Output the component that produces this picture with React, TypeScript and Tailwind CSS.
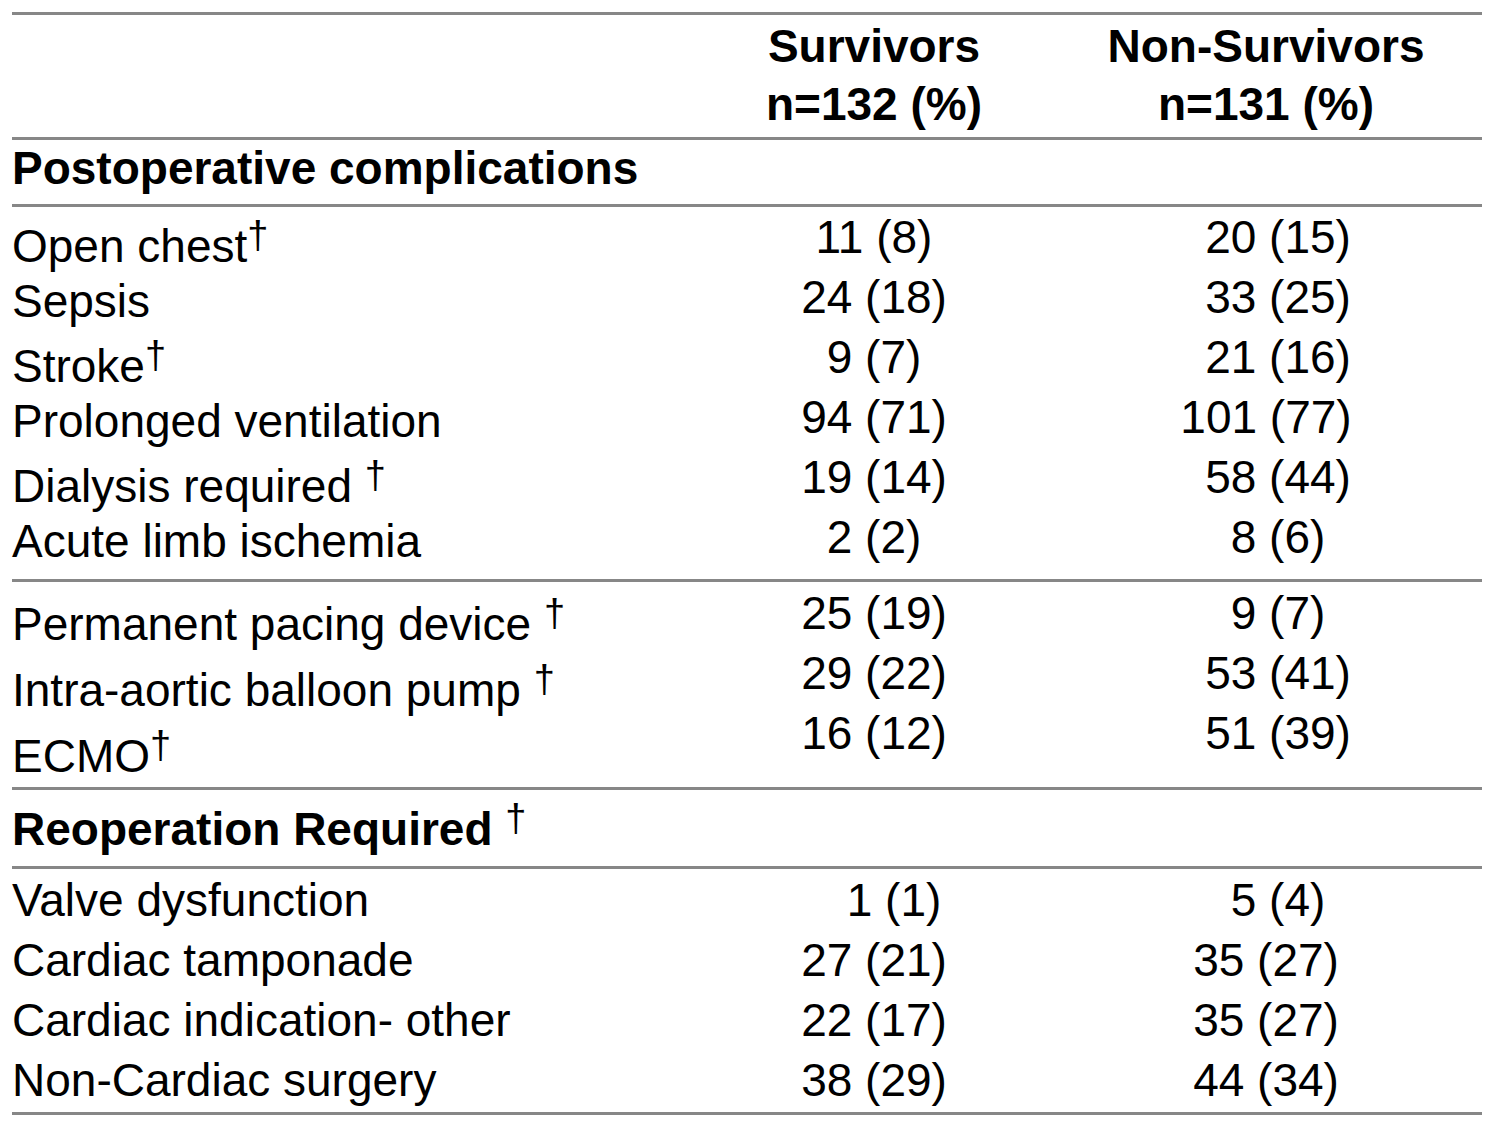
import React from 'react';

type Row = {
  label: string;
  dag?: 'tight' | 'spaced';
  s: string;
  n: string;
  sCls?: string;
  nCls?: string;
};

const section1: Row[] = [
  { label: 'Open chest', dag: 'tight', s: '11 (8)', n: '20 (15)' },
  { label: 'Sepsis', s: '24 (18)', n: '33 (25)' },
  { label: 'Stroke', dag: 'tight', s: '9 (7)', n: '21 (16)' },
  { label: 'Prolonged ventilation', s: '94 (71)', n: '101 (77)', nCls: 'pl-0' },
  { label: 'Dialysis required', dag: 'spaced', s: '19 (14)', n: '58 (44)' },
  { label: 'Acute limb ischemia', s: '2 (2)', n: '8 (6)' },
];

const section2: Row[] = [
  { label: 'Permanent pacing device', dag: 'spaced', s: '25 (19)', n: '9 (7)' },
  { label: 'Intra-aortic balloon pump', dag: 'spaced', s: '29 (22)', n: '53 (41)' },
  { label: 'ECMO', dag: 'tight', s: '16 (12)', n: '51 (39)' },
];

const section3: Row[] = [
  { label: 'Valve dysfunction', s: '1 (1)', n: '5 (4)', sCls: 'pl-[40px]' },
  { label: 'Cardiac tamponade', s: '27 (21)', n: '35 (27)', nCls: 'pl-0' },
  { label: 'Cardiac indication- other', s: '22 (17)', n: '35 (27)', nCls: 'pl-0' },
  { label: 'Non-Cardiac surgery', s: '38 (29)', n: '44 (34)', nCls: 'pl-0' },
];

const grid = 'grid grid-cols-[738px_248px_1fr]';

function Rule() {
  return <div className="h-[3px] bg-[#878787]" />;
}

// superscript dagger, kept out of the line box so rows keep their height
function Dagger({ spaced }: { spaced?: boolean }) {
  return (
    <>
      {spaced ? ' ' : ''}
      <span className="text-[38px] font-normal leading-[0px] align-[14px]">†</span>
    </>
  );
}

function Label({ row, plain, dagger }: { row: Row; plain: string; dagger: string }) {
  return (
    <div className={`whitespace-nowrap ${row.dag ? dagger : plain}`}>
      {row.label}
      {row.dag && <Dagger spaced={row.dag === 'spaced'} />}
    </div>
  );
}

function Section({
  rows,
  height,
  labelTop,
  valueTop,
  plain,
  dagger,
}: {
  rows: Row[];
  height: string;
  labelTop: string;
  valueTop: string;
  plain: string;
  dagger: string;
}) {
  return (
    <div className={`${grid} ${height}`}>
      <div className={`flex flex-col ${labelTop}`}>
        {rows.map((r) => (
          <Label key={r.label} row={r} plain={plain} dagger={dagger} />
        ))}
      </div>
      <div className={`flex flex-col ${valueTop}`}>
        {rows.map((r) => (
          <div key={r.label} className={`text-center leading-[60px] whitespace-nowrap ${r.sCls ?? ''}`}>
            {r.s}
          </div>
        ))}
      </div>
      <div className={`flex flex-col pl-[52px] ${valueTop}`}>
        {rows.map((r) => (
          <div key={r.label} className={`text-center leading-[60px] whitespace-nowrap ${r.nCls ?? 'pl-[24px]'}`}>
            {r.n}
          </div>
        ))}
      </div>
    </div>
  );
}

export default function App() {
  return (
    <div className="min-h-[1136px] w-[1496px] bg-white pt-[12px] text-black">
      <div className="ml-[12px] w-[1470px] text-[46px] font-['Liberation_Sans',Arial,sans-serif]">
        <Rule />

        {/* header */}
        <div className={`${grid} h-[122px] pt-[2px] font-bold leading-[58px]`}>
          <div />
          <div className="text-center whitespace-nowrap">
            <div>Survivors</div>
            <div>n=132 (%)</div>
          </div>
          <div className="pl-[52px] text-center whitespace-nowrap">
            <div>Non-Survivors</div>
            <div>n=131 (%)</div>
          </div>
        </div>
        <Rule />

        <div className="h-[64px] pt-[6px] font-bold leading-[45px]">Postoperative complications</div>
        <Rule />

        <Section
          rows={section1}
          height="h-[372px]"
          labelTop="pt-[2px]"
          valueTop="pt-0"
          plain="leading-[55px]"
          dagger="leading-[55px] pt-[10px]"
        />
        <Rule />

        <Section
          rows={section2}
          height="h-[205px]"
          labelTop="pt-[4px]"
          valueTop="pt-[1px]"
          plain="leading-[56px]"
          dagger="leading-[56px] pt-[10px]"
        />
        <Rule />

        <div className="h-[76px] pt-[17px] font-bold leading-[45px] whitespace-nowrap">
          Reoperation Required
          <Dagger spaced />
        </div>
        <Rule />

        <Section
          rows={section3}
          height="h-[243px]"
          labelTop="pt-[1px]"
          valueTop="pt-[1px]"
          plain="leading-[60px]"
          dagger="leading-[60px]"
        />
        <Rule />
      </div>
    </div>
  );
}
